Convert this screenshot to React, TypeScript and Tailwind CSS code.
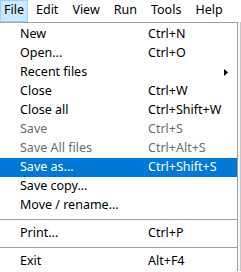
const bar = ['File', 'Edit', 'View', 'Run', 'Tools', 'Help']

type Item =
  | { sep: true }
  | { sep?: false; label: string; key?: string; disabled?: boolean; active?: boolean; sub?: boolean }

const items: Item[] = [
  { label: 'New', key: 'Ctrl+N' },
  { label: 'Open...', key: 'Ctrl+O' },
  { label: 'Recent files', sub: true },
  { label: 'Close', key: 'Ctrl+W' },
  { label: 'Close all', key: 'Ctrl+Shift+W' },
  { label: 'Save', key: 'Ctrl+S', disabled: true },
  { label: 'Save All files', key: 'Ctrl+Alt+S', disabled: true },
  { label: 'Save as...', key: 'Ctrl+Shift+S', active: true },
  { label: 'Save copy...' },
  { label: 'Move / rename...' },
  { sep: true },
  { label: 'Print...', key: 'Ctrl+P' },
  { sep: true },
  { label: 'Exit', key: 'Alt+F4' },
]

export default function App() {
  return (
    <div className="h-[272px] w-[241px] overflow-hidden bg-white text-black" style={{ fontFamily: '"Noto Sans", sans-serif' }}>
      {/* menu bar */}
      <div className="flex h-[22px] items-stretch text-[12.5px]">
        {bar.map((b, i) => (
          <div
            key={b}
            className={
              i === 0
                ? 'mr-[1px] flex w-[28px] items-center border border-[#99d1ff] bg-[#cce8ff] pb-px pl-[3px]'
                : 'flex items-center px-[7px] pb-px'
            }
          >
            {b}
          </div>
        ))}
      </div>
      {/* dropdown */}
      <div className="flex">
        <div className="w-[238px] border-t border-r border-[#a0a0a0] bg-white pt-[2px] text-[12.5px]">
          {items.map((it, i) =>
            it.sep ? (
              <div key={i} className="flex h-[9px] items-center">
                <div className="h-px w-full bg-[#a0a0a0]" />
              </div>
            ) : (
              <div
                key={i}
                className={
                  'flex h-[19px] items-center ' +
                  (it.active ? 'bg-[#0078d7] text-white' : it.disabled ? 'text-[#6d6d6d]' : '')
                }
              >
                <div className="w-[148px] pl-[20px]">{it.label}</div>
                <div className="flex-1">{it.key}</div>
                {it.sub && (
                  <svg width="4" height="7" viewBox="0 0 4 7" className="mr-[9px]">
                    <path d="M0 0L4 3.5L0 7Z" fill="#000" />
                  </svg>
                )}
              </div>
            )
          )}
        </div>
        <div className="flex-1 border-r border-[#c8c8c8] bg-[#f7f7f7]" />
      </div>
    </div>
  )
}
